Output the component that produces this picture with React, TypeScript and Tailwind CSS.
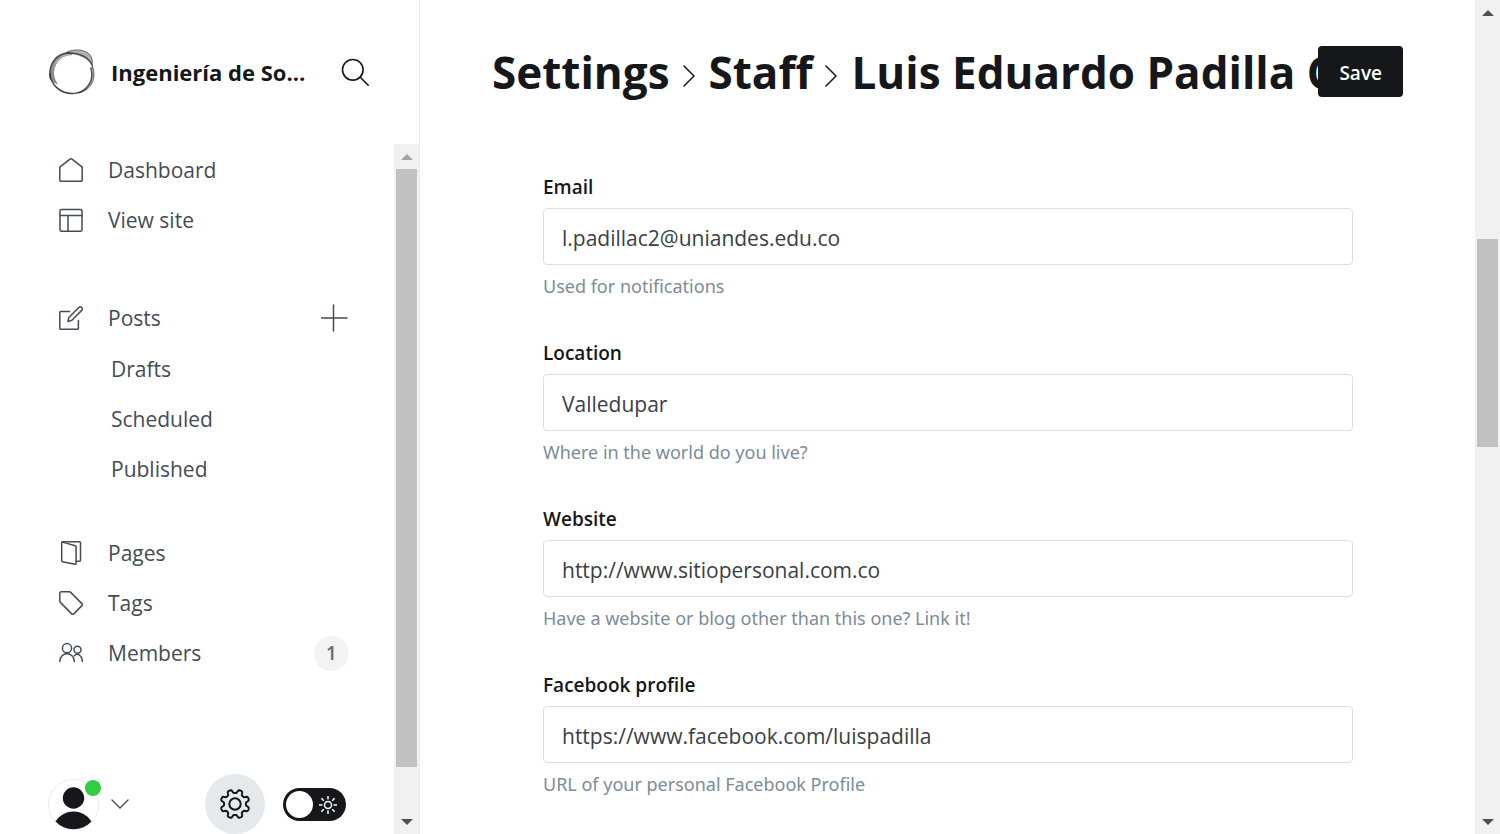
import React, { useId, type ReactNode } from "react";

type IconProps = { children: ReactNode };

function NavIcon({ children }: IconProps) {
  return (
    <svg
      aria-hidden="true"
      viewBox="0 0 24 24"
      className="size-6 shrink-0 fill-none stroke-current stroke-[1.5]"
      strokeLinecap="round"
      strokeLinejoin="round"
    >
      {children}
    </svg>
  );
}

const icons = {
  home: <path d="M.8 9.200 11 1.200q1-.8 2 0l10.200 8v13q0 1.100-1.100 1.100H1.900q-1.100 0-1.100-1.100z" />,
  layout: (
    <>
      <rect x="1" y="1.500" width="22" height="21.700" rx="1.500" />
      <path d="M1 7.500h22M9 7.500V23" />
    </>
  ),
  posts: (
    <>
      <path d="M10.500 5.500H1.800q-1 0-1 1v15.800q0 1 1 1h16.600q1 0 1-1V14.500" />
      <path d="m9 15.500.8-4 10-10a1.900 1.900 0 0 1 2.900 2.900l-9.800 9.900z" />
    </>
  ),
  pages: (
    <>
      <path d="M2.700 2v17.800q0 .7.700.9l12.800 2.600q.9.100.9-.8V5.700q0-.8-.8-1L3.500 1.100q-.8-.1-.8.900z" />
      <path d="M3.300.8h17.200q1 0 1 1v17.500q0 1-1 1h-3.200" />
    </>
  ),
  tags: (
    <path d="M.8 2.300q0-1.500 1.500-1.500h8q.8 0 1.400.6l11.200 11.200q1 1 0 2l-8.200 8.300q-1 1-2 0L1.400 11.400q-.6-.6-.6-1.400z" />
  ),
  members: (
    <>
      <circle cx="8" cy="7.200" r="4.600" />
      <path d="M.8 20.500c0-10.200 14.500-10.200 14.500 0" />
      <circle cx="18.500" cy="8.800" r="3.500" />
      <path d="M15.300 14.800c3-3.200 8-.8 8 5.700" />
    </>
  ),
};

function NavLink({ icon, label, children }: { icon: ReactNode; label: string; children?: ReactNode }) {
  return (
    <li className="flex h-[50px] items-center justify-between">
      <a href="#" className="flex items-center gap-[25px]">
        <NavIcon>{icon}</NavIcon>
        <span className="pt-[2px]">{label}</span>
      </a>
      {children}
    </li>
  );
}

function Arrow({ up, dark }: { up?: boolean; dark?: boolean }) {
  return (
    <svg
      aria-hidden="true"
      viewBox="0 0 12 6"
      className={dark ? "h-[6px] w-3 fill-[#505050]" : "h-[6px] w-3 fill-[#a3a3a3]"}
    >
      <path d={up ? "M0 6 6 0l6 6z" : "M0 0h12L6 6z"} />
    </svg>
  );
}

function Scrollbar({ thumb, upDark }: { thumb: ReactNode; upDark?: boolean }) {
  return (
    <div className="flex h-full w-[25px] shrink-0 flex-col items-center bg-[#f1f1f1]" aria-hidden="true">
      <div className="flex h-[25px] shrink-0 items-center">
        <Arrow up dark={upDark} />
      </div>
      <div className="flex w-full flex-1 flex-col px-[2px]">{thumb}</div>
      <div className="flex h-[25px] shrink-0 items-center">
        <Arrow dark />
      </div>
    </div>
  );
}

function Logo() {
  return (
    <svg aria-hidden="true" viewBox="0 0 46 46" className="size-[46px] shrink-0">
      <g fill="#222">
        <path
          opacity=".5"
          d="M1 30C-2 16 6 4 20 3l5 1.500C14 4 4.500 11 4 23c0 4 1 8 4 12-3-1-6-3-7-5z"
        />
        <path opacity=".35" d="M17 3.500C25-.5 36 0 41 6c3 4 2.500 8 2.500 11C38 8 28 5 17 5z" />
        <path opacity=".4" d="M43 16c5 12 1 24-13 28.500l-4-.5c12-2 19-13 16.500-24z" />
        <path opacity=".55" d="M3 31c4 9 12 13.500 21 13 6 0 11-2 14-6-7 9-30 11-35-7z" />
      </g>
      <g fill="none" stroke="#222">
        <path opacity=".6" strokeWidth="1" d="M17 3.500C25-.5 36 0 41 6c3 4 2.500 9 2 14" />
        <path opacity=".7" strokeWidth="1.400" d="M1.500 30C-1.500 15 8 4 20 4c10 0 19 4 23 12" />
        <path opacity=".5" strokeWidth="1" d="M43 16c5 12 1 24-13 28" />
        <path opacity=".5" strokeWidth="1.200" d="M8 35C-1 22 8 6 23 5.500" />
        <path opacity=".75" strokeWidth="1.400" d="M1 24c0 11 10 20.500 22 20.500 10 0 16-6 19-13 1-4 1-9-.5-13" />
      </g>
    </svg>
  );
}

const gearPath = (() => {
  const points: string[] = [];
  const steps = 160;
  for (let i = 0; i < steps; i++) {
    const a = (i / steps) * Math.PI * 2;
    const wave = Math.tanh(2.2 * Math.cos(8 * a - Math.PI)) / Math.tanh(2.2);
    const r = 12.7 + 1.8 * wave;
    points.push(`${(16 + r * Math.cos(a)).toFixed(2)} ${(16 + r * Math.sin(a)).toFixed(2)}`);
  }
  return `M${points.join("L")}z`;
})();

function Sidebar() {
  return (
    <aside className="flex w-[420px] shrink-0 flex-col border-r border-[#e6e9eb] text-[21px] text-[#454c54]">
      <header className="flex h-36 shrink-0 items-center pl-[49px]">
        <Logo />
        <strong className="ml-4 w-[200px] truncate text-[22px] font-bold text-[#15171a]">Ingeniería de Software</strong>
        <button type="button" aria-label="Search" className="ml-[30px]">
          <svg
            aria-hidden="true"
            viewBox="0 0 28 28"
            className="size-7 fill-none stroke-[#15171a] stroke-[1.6]"
            strokeLinecap="round"
          >
            <circle cx="11.800" cy="11.800" r="10.300" />
            <path d="m19.200 19.200 8 8" />
          </svg>
        </button>
      </header>
      <div className="flex min-h-0 flex-1">
        <div className="flex min-w-0 flex-1 flex-col">
          <nav className="flex-1 pt-px pr-[45px] pl-[59px]">
            <ul>
              <NavLink icon={icons.home} label="Dashboard" />
              <NavLink icon={icons.layout} label="View site" />
            </ul>
            <ul className="mt-12">
              <NavLink icon={icons.posts} label="Posts">
                <button type="button" aria-label="New post">
                  <svg
                    aria-hidden="true"
                    viewBox="0 0 28 28"
                    className="size-7 fill-none stroke-current stroke-[1.5]"
                    strokeLinecap="round"
                  >
                    <path d="M0 14h26M12.500 1v26" />
                  </svg>
                </button>
              </NavLink>
              {["Drafts", "Scheduled", "Published"].map((name) => (
                <li key={name} className="flex h-[50px] items-center pt-[3px] pl-[52px]">
                  <a href="#">{name}</a>
                </li>
              ))}
            </ul>
            <ul className="mt-[35px]">
              <NavLink icon={icons.pages} label="Pages" />
              <NavLink icon={icons.tags} label="Tags" />
              <NavLink icon={icons.members} label="Members">
                <span className="flex size-[35px] items-center justify-center rounded-full bg-[#f1f3f4] text-[19px] font-semibold text-[#626d79]">
                  1
                </span>
              </NavLink>
            </ul>
          </nav>
          <footer className="flex h-[60px] items-center px-12">
            <button type="button" aria-label="Account menu" className="relative flex items-center gap-3">
              <svg aria-hidden="true" viewBox="0 0 51 51" className="size-[51px]">
                <circle cx="25.500" cy="25.500" r="25" fill="#fff" stroke="#e6e9eb" />
                <circle cx="25.500" cy="19" r="10.700" fill="#15171a" />
                <path d="M7.500 42.500c8.500-13.300 27.500-13.300 36 0a25 25 0 0 1-36 0z" fill="#15171a" />
              </svg>
              <span className="absolute top-px left-[37px] size-4 rounded-full bg-[#30cf43]" />
              <svg
                aria-hidden="true"
                viewBox="0 0 18 10"
                className="h-[10px] w-[18px] fill-none stroke-current stroke-[1.4]"
                strokeLinecap="round"
                strokeLinejoin="round"
              >
                <path d="m1 1 8 8 8-8" />
              </svg>
            </button>
            <button
              type="button"
              aria-label="Settings"
              className="ml-auto flex size-[60px] items-center justify-center rounded-full bg-[#e6e9eb]"
            >
              <svg aria-hidden="true" viewBox="0 0 32 32" className="size-8 fill-none stroke-[#15171a] stroke-2" strokeLinejoin="round">
                <path d={gearPath} />
                <circle cx="16" cy="16" r="5.700" />
              </svg>
            </button>
            <button
              type="button"
              role="switch"
              aria-checked="false"
              aria-label="Dark mode"
              className="ml-[18px] flex h-[33px] w-[63px] items-center justify-between rounded-full bg-[#15171a] pr-[9px] pl-[3px]"
            >
              <span className="size-[27px] rounded-full bg-white" />
              <svg aria-hidden="true" viewBox="0 0 18 18" className="mt-[2px] size-[18px] fill-none stroke-white stroke-[1.5]">
                <circle cx="9" cy="9" r="3.500" />
                <path d="M9 0v3.500M9 14.500V18M0 9h3.500M14.500 9H18M2.300 2.300l2.500 2.500M13.200 13.200l2.500 2.500M2.300 15.700l2.500-2.500M13.200 4.800l2.500-2.500" />
              </svg>
            </button>
          </footer>
        </div>
        <Scrollbar thumb={<div className="h-[598px] bg-[#c1c1c1]" />} />
      </div>
    </aside>
  );
}

function Field({ label, value, hint, type }: { label: string; value: string; hint: string; type: string }) {
  const id = useId();
  return (
    <div className="flex flex-col">
      <label htmlFor={id} className="text-[19px] leading-6 font-semibold text-[#15171a]">
        {label}
      </label>
      <input
        id={id}
        type={type}
        defaultValue={value}
        aria-describedby={`${id}-hint`}
        className="mt-[9px] h-[57px] rounded-[4px] border border-[#dddedf] px-[18px] pt-[2px] text-[21px] text-[#394047]"
      />
      <p id={`${id}-hint`} className="mt-[9px] font-['Noto_Sans','Open_Sans',sans-serif] text-lg leading-6 text-[#7c8b9a]">
        {hint}
      </p>
    </div>
  );
}

function Chevron() {
  return (
    <svg
      aria-hidden="true"
      viewBox="0 0 12 22"
      className="mt-2 mr-[14px] ml-[13px] h-[22px] w-3 shrink-0 fill-none stroke-[#15171a] stroke-[1.5]"
      strokeLinecap="round"
      strokeLinejoin="round"
    >
      <path d="m1 1 10 10L1 21" />
    </svg>
  );
}

export default function App() {
  return (
    <div className="flex h-screen overflow-hidden bg-white font-['Open_Sans','Noto_Sans',sans-serif]">
      <Sidebar />
      <main className="min-w-0 flex-1 px-[72px]">
        <header className="flex h-[143px] items-center">
          <h1 className="flex w-0 flex-1 items-center overflow-hidden text-[44px] font-bold whitespace-nowrap text-[#15171a]">
            <a href="#">Settings</a>
            <Chevron />
            <a href="#">Staff</a>
            <Chevron />
            <span>Luis Eduardo Padilla C</span>
          </h1>
          <button
            type="button"
            className="h-[51px] shrink-0 rounded-[4px] bg-[#15171a] px-[21px] pt-[3px] text-[19px] font-semibold text-white"
          >
            Save
          </button>
        </header>
        <form className="flex flex-col gap-[43px] pt-8 pr-[50px] pl-[51px]">
          <Field type="email" label="Email" value="l.padillac2@uniandes.edu.co" hint="Used for notifications" />
          <Field type="text" label="Location" value="Valledupar" hint="Where in the world do you live?" />
          <Field
            type="url"
            label="Website"
            value="http://www.sitiopersonal.com.co"
            hint="Have a website or blog other than this one? Link it!"
          />
          <Field
            type="url"
            label="Facebook profile"
            value="https://www.facebook.com/luispadilla"
            hint="URL of your personal Facebook Profile"
          />
        </form>
      </main>
      <Scrollbar upDark thumb={<div className="mt-[214px] h-[208px] bg-[#c1c1c1]" />} />
    </div>
  );
}
